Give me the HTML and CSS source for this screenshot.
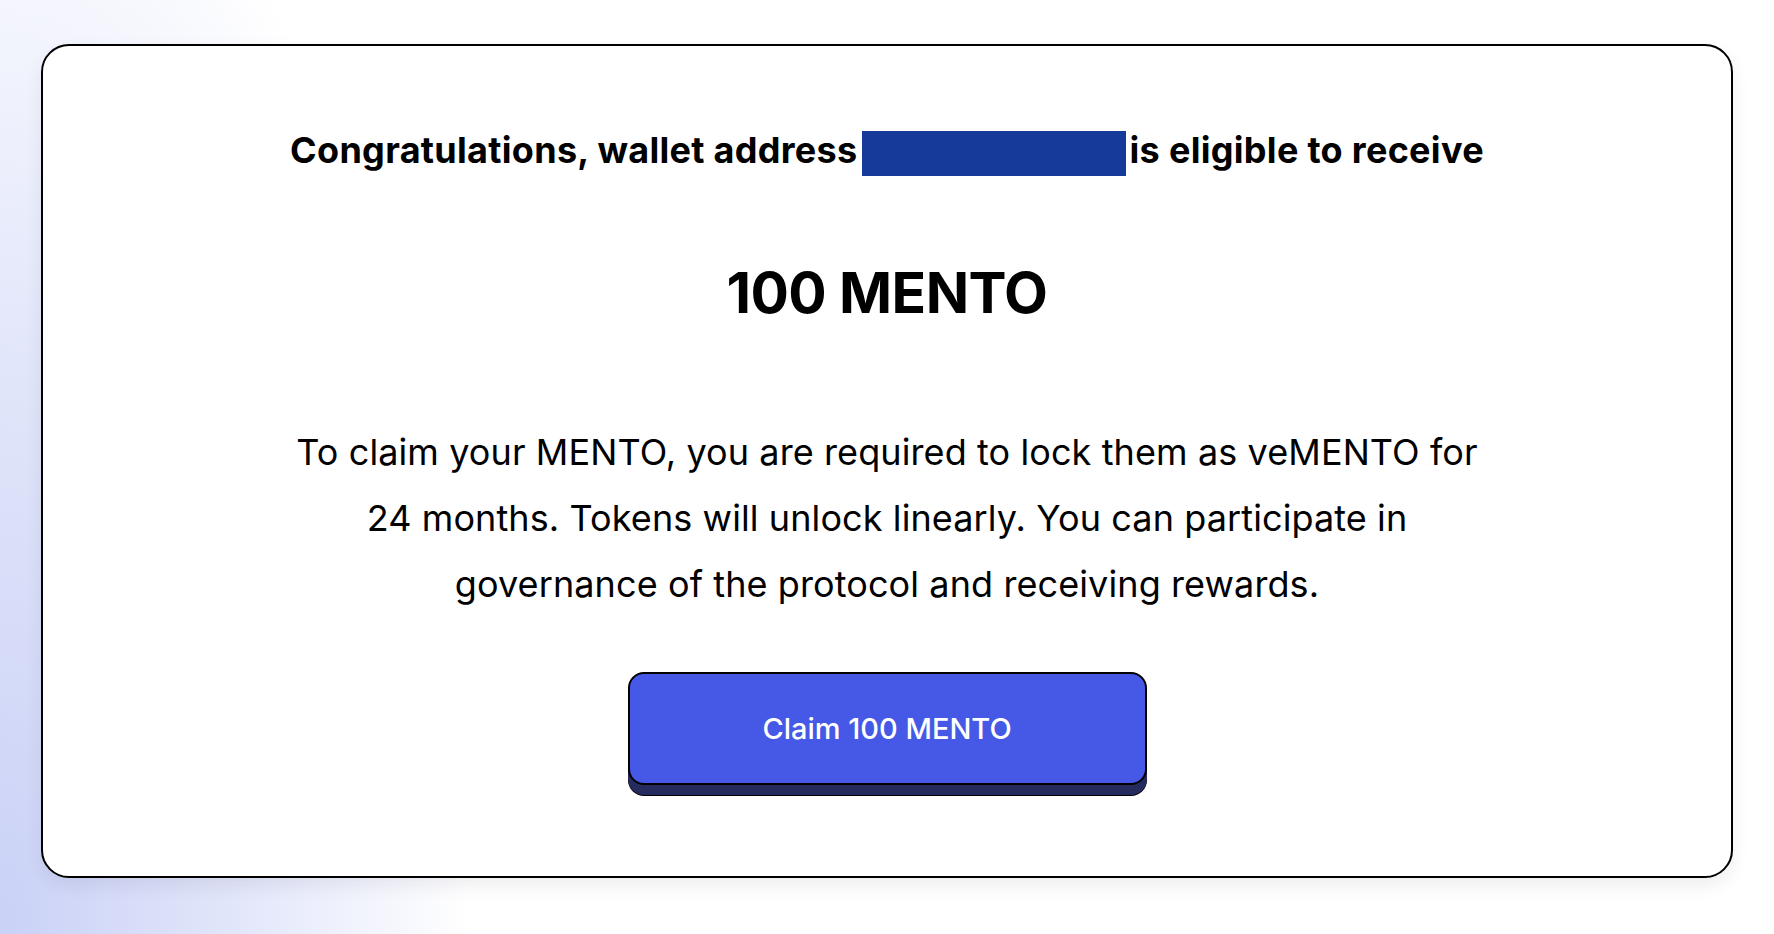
FILE: index.html
```html
<!DOCTYPE html>
<html lang="en">
<head>
<meta charset="utf-8">
<title>Claim MENTO</title>
<link rel="stylesheet" href="styles.css">
</head>
<body>
<main class="page">
  <section class="card">
    <h1 class="headline">Congratulations, wallet address<span class="redacted"></span>is eligible to receive</h1>
    <p class="amount">100 MENTO</p>
    <p class="details">To claim your MENTO, you are required to lock them as veMENTO for 24 months. Tokens will unlock linearly. You can participate in governance of the protocol and receiving rewards.</p>
    <button class="claim-btn" type="button">Claim 100 MENTO</button>
  </section>
</main>
</body>
</html>
```

FILE: styles.css
```css
* { box-sizing: border-box; }

html, body {
  margin: 0;
  height: 100%;
}

body {
  font-family: Inter, "Noto Sans", sans-serif;
  color: #000;
  background:
    radial-gradient(ellipse 470px 1150px at 0% 100%, #c9d1f6 0%, #e2e6fa 50%, rgba(255,255,255,0) 100%),
    #ffffff;
  overflow: hidden;
}

.page {
  padding: 44px 41px 56px;
}

.card {
  height: 834px;
  background: #fff;
  border: 2px solid #000;
  border-radius: 28px;
  box-shadow: 0 8px 18px rgba(20, 20, 40, 0.07);
  display: flex;
  flex-direction: column;
  align-items: center;
  padding-top: 80px;
}

.headline {
  margin: 0;
  font-size: 36px;
  font-weight: 700;
  line-height: 48px;
  letter-spacing: 0.3px;
  white-space: nowrap;
}

.redacted {
  display: inline-block;
  width: 264px;
  height: 45px;
  margin: 0 4px;
  background: #153a9a;
  vertical-align: middle;
}

.amount {
  margin: 84px 0 0;
  font-size: 57px;
  font-weight: 700;
  line-height: 66px;
  letter-spacing: -0.6px;
}

.details {
  margin: 93px 0 0;
  width: 1210px;
  font-size: 36px;
  font-weight: 400;
  line-height: 66px;
  letter-spacing: 0.1px;
  text-align: center;
}

.claim-btn {
  margin-top: 55px;
  width: 519px;
  height: 113px;
  background: #4659e6;
  color: #fff;
  border: 2px solid #000;
  border-radius: 16px;
  box-shadow: 0 10px 0 0 #262b5e, 0 11px 0 0 #000;
  font-family: Inter, "Noto Sans", sans-serif;
  font-size: 29px;
  font-weight: 500;
  cursor: pointer;
}
```
